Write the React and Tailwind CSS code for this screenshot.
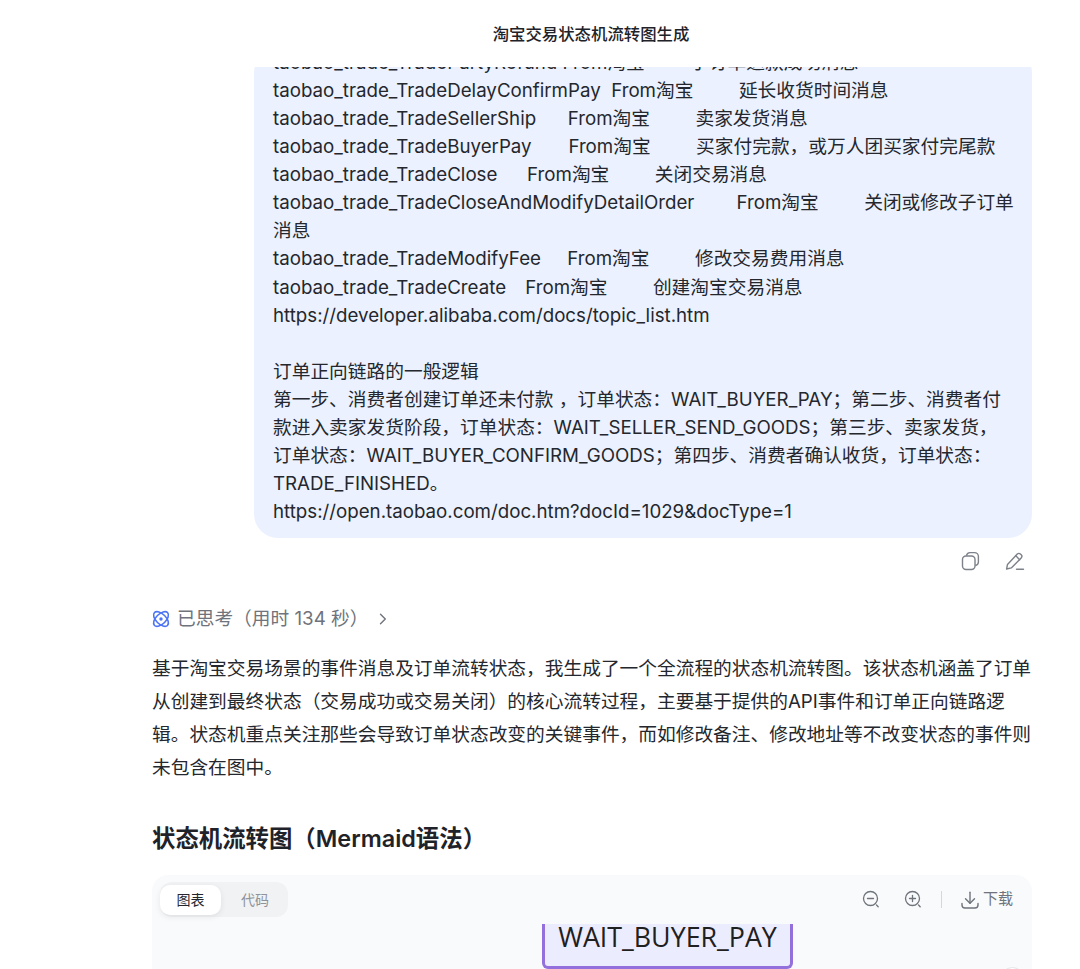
import React from "react";

const bubbleLines = `taobao_trade_TradePartyRefund From淘宝        \u2009子订单退款成功消息
taobao_trade_TradeDelayConfirmPay  From淘宝        \u2009延长收货时间消息
taobao_trade_TradeSellerShip      From淘宝        \u2009卖家发货消息
taobao_trade_TradeBuyerPay       From淘宝        \u2009买家付完款，或万人团买家付完尾款
taobao_trade_TradeClose     \u2009From淘宝        \u2009关闭交易消息
taobao_trade_TradeCloseAndModifyDetailOrder        From淘宝        \u2009关闭或修改子订单消息
taobao_trade_TradeModifyFee     From淘宝        \u2009修改交易费用消息
taobao_trade_TradeCreate   \u2009From淘宝        \u2009创建淘宝交易消息
https://developer.alibaba.com/docs/topic_list.htm

订单正向链路的一般逻辑
第一步、消费者创建订单还未付款 ，订单状态：WAIT_BUYER_PAY；第二步、消费者付款进入卖家发货阶段，订单状态：WAIT_SELLER_SEND_GOODS；第三步、卖家发货，
订单状态：WAIT_BUYER_CONFIRM_GOODS；第四步、消费者确认收货，订单状态：TRADE_FINISHED。
https://open.taobao.com/doc.htm?docId=1029&docType=1`;

function CopyIcon() {
  return (
    <svg width="20" height="20" viewBox="0 0 20 20" fill="none" stroke="#7d8189" strokeWidth="1.4">
      <rect x="1.5" y="5" width="12.5" height="13.5" rx="3.5" />
      <path d="M5.5 4.8C5.7 2.9 7 1.6 9 1.6h4.5c2.2 0 3.9 1.7 3.9 3.9v5.5c0 1.9-1.2 3.2-3.2 3.5" />
    </svg>
  );
}

function PenIcon() {
  return (
    <svg width="20" height="20" viewBox="0 0 20 20" fill="none" stroke="#7d8189" strokeWidth="1.4" strokeLinejoin="round" strokeLinecap="round">
      <path d="M1.6 18l.9-4.6L12.3 3c.9-.9 2.2-.9 3.1 0l.8.8c.9.9.9 2.2 0 3.1L6.3 16.9 1.6 18z" />
      <path d="M10.8 4.8l3.9 3.9" />
      <path d="M11.5 18.2h7" />
    </svg>
  );
}

function ThinkIcon() {
  return (
    <svg width="18" height="18" viewBox="0 0 18 18" fill="none" stroke="#4d74f5" strokeWidth="1.6">
      <ellipse cx="9" cy="9" rx="9.2" ry="5" transform="rotate(45 9 9)" />
      <ellipse cx="9" cy="9" rx="9.2" ry="5" transform="rotate(-45 9 9)" />
      <circle cx="9" cy="9" r="1.7" fill="#4d74f5" stroke="none" />
    </svg>
  );
}

function Chevron() {
  return (
    <svg width="8" height="12" viewBox="0 0 8 12" fill="none" stroke="#6f737b" strokeWidth="1.4" strokeLinecap="round" strokeLinejoin="round">
      <path d="M1.500 1.200L6.300 6l-4.800 4.800" />
    </svg>
  );
}

function ZoomIcon({ plus }) {
  return (
    <svg width="19" height="19" viewBox="0 0 19 19" fill="none" stroke="#6f737b" strokeWidth="1.3" strokeLinecap="round">
      <circle cx="8.500" cy="8.500" r="7" />
      <path d="M5.500 8.500h6" />
      {plus && <path d="M8.500 5.500v6" />}
      <path d="M14.500 15l1.700 1.700" />
    </svg>
  );
}

function DownloadIcon() {
  return (
    <svg width="18" height="18" viewBox="0 0 18 18" fill="none" stroke="#6f737b" strokeWidth="1.4" strokeLinecap="round" strokeLinejoin="round">
      <path d="M9 1.200v11" />
      <path d="M4.500 7.800L9 12.300l4.500-4.500" />
      <path d="M1 12.500v1.500c0 1.800 1.200 3 3 3h10c1.800 0 3-1.200 3-3v-1.500" />
    </svg>
  );
}

export default function App() {
  return (
    <div className="flex h-[969px] w-[1080px] flex-col overflow-hidden bg-white pl-[152px] pr-[48px] font-['Inter','Noto_Sans_CJK_SC',sans-serif]">
      <header className="flex h-[67px] flex-none items-center justify-center pr-[2px] pt-[1px] text-[16.4px] font-medium text-[#1f2329]">
        淘宝交易状态机流转图生成
      </header>
      <main className="flex-1 overflow-hidden">
        <div className="-mt-[18px] ml-[102px] rounded-[24px] bg-[#ebf1fe] pb-[12px] pl-[19px] pr-[14px]">
          <p className="whitespace-pre-wrap break-words text-[18.72px] leading-[28.07px] text-[#24272d]">{bubbleLines}</p>
        </div>
        <div className="mt-[13px] flex justify-end gap-[24px] pr-[7px]">
          <CopyIcon />
          <PenIcon />
        </div>
        <div className="mt-[34px] flex items-center text-[18.72px] leading-[28px] text-[#6f737b]">
          <ThinkIcon />
          <span className="ml-[7px]">已思考（用时 134 秒）</span>
          <span className="ml-[11px] flex items-center"><Chevron /></span>
        </div>
        <p className="mt-[19px] text-[18.72px] leading-[33px] text-[#24272d]">
          基于淘宝交易场景的事件消息及订单流转状态，我生成了一个全流程的状态机流转图。该状态机涵盖了订单从创建到最终状态（交易成功或交易关闭）的核心流转过程，主要基于提供的API事件和订单正向链路逻辑。状态机重点关注那些会导致订单状态改变的关键事件，而如修改备注、修改地址等不改变状态的事件则未包含在图中。
        </p>
        <h2 className="mt-[37px] text-[23.4px] font-semibold leading-[36px] text-[#1f2329]">
          状态机流转图（Mermaid语法）
        </h2>
        <section className="relative mt-[18px] h-[200px] rounded-[16px] bg-[#f9fafb] px-[8px] pt-[7px]">
          <div className="flex items-start justify-between">
            <div className="flex h-[35px] w-[128px] items-center rounded-[12px] bg-[#f1f2f4] text-[14px]">
              <span className="flex h-[30px] w-[61px] items-center justify-center rounded-[10px] bg-white text-[#24272d] shadow-[0_2px_6px_rgba(0,0,0,0.08)]">图表</span>
              <span className="flex h-[30px] w-[67px] items-center justify-center pl-[1px] text-[#8f939a]">代码</span>
            </div>
            <div className="flex h-[35px] items-center pr-[11px] text-[15px] text-[#6f737b]">
              <ZoomIcon />
              <span className="ml-[23px]"><ZoomIcon plus /></span>
              <span className="ml-[18px] h-[17px] w-px bg-[#d5d7db]" />
              <span className="ml-[19px]"><DownloadIcon /></span>
              <span className="ml-[4px]">下载</span>
            </div>
          </div>
          <div className="ml-[382px] mt-[7px] flex h-[45px] w-[251px] justify-center rounded-b-[6px] border-x-[3px] border-b-[3px] border-[#9370db] bg-[#ececff] font-['Open_Sans',sans-serif] text-[26.8px] leading-[26px] text-[#1f2020]">
            WAIT_BUYER_PAY
          </div>
          <div className="absolute right-[7px] top-[92px] h-[25px] w-[25px] rounded-full border border-[#e3e4e7] bg-white" />
        </section>
      </main>
    </div>
  );
}
